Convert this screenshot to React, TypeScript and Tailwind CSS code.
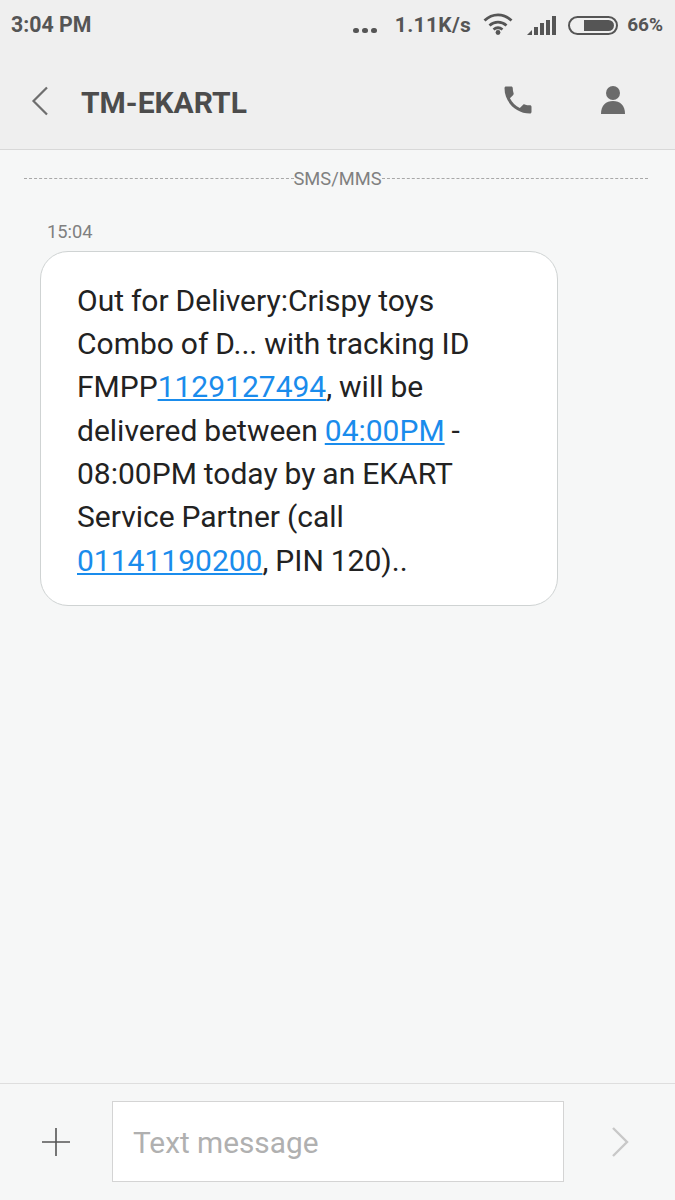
import type { ReactNode } from "react";

const Link = ({ children }: { children: ReactNode }) => (
  <span className="text-[#1a8cec] underline decoration-[1.5px] underline-offset-2">{children}</span>
);

const StatusIcons = () => (
  <div className="flex items-center text-[#555555]">
    <div className="mt-[11px] flex gap-[3px]">
      <div className="h-[5px] w-[6px] rounded-full bg-[#555555]" />
      <div className="h-[5px] w-[6px] rounded-full bg-[#555555]" />
      <div className="h-[5px] w-[6px] rounded-full bg-[#555555]" />
    </div>
    <span className="ml-[18px] mt-[1px] text-[21px] font-bold tracking-[0.3px]">1.11K/s</span>
    <svg width="30" height="22" viewBox="0 0 30 22" className="ml-[12px] -mt-[3px]" fill="none" stroke="currentColor" strokeWidth="2.8">
      <path d="M1.5 7.5c8-7.5 19-7.5 27 0" />
      <path d="M6.5 12.5c5-4.5 12-4.5 17 0" />
      <path d="M10.5 16.5c3-2.3 6-2.3 9 0" />
      <circle cx="15" cy="19.5" r="2.4" fill="currentColor" stroke="none" />
    </svg>
    <svg width="29" height="19" viewBox="0 0 29 19" className="ml-[14px]" fill="currentColor">
      <path d="M0 19l5-5v5z" />
      <rect x="7" y="11" width="4" height="8" />
      <rect x="13" y="7" width="4" height="12" />
      <rect x="19" y="4" width="4" height="15" />
      <rect x="25" y="0" width="4" height="19" />
    </svg>
    <div className="ml-[12px] flex h-[19px] w-[50px] items-center justify-end rounded-full border-2 border-[#555555] p-[2px]">
      <div className="h-full w-[30px] rounded-r-full bg-[#555555]" />
    </div>
    <span className="ml-[9px] text-[19px] font-bold">66%</span>
  </div>
);

export default function App() {
  return (
    <div className="flex h-[1200px] w-[675px] flex-col overflow-hidden bg-[#f6f7f7] font-['Roboto',sans-serif]">
      <div className="bg-[#efefef]">
        <div className="flex h-[50px] items-center justify-between pl-[11px] pr-[12px]">
          <span className="text-[21.3px] font-bold text-[#555555]">3:04 PM</span>
          <StatusIcons />
        </div>
        <div className="flex h-[100px] items-center border-b border-[#d8d8d8]">
          <svg width="18" height="30" viewBox="0 0 18 30" className="ml-[31px] mt-[3px]" fill="none" stroke="#6e6e6e" strokeWidth="2.2">
            <path d="M16 1.5 2.5 15 16 28.5" />
          </svg>
          <h1 className="ml-[32px] mt-[5px] text-[30px] font-bold text-[#4c4c4c]">TM-EKARTL</h1>
          <svg width="36" height="36" viewBox="0 0 24 24" className="ml-auto" fill="#666666">
            <path d="M6.62 10.79c1.44 2.83 3.76 5.14 6.59 6.59l2.2-2.2c.27-.27.67-.36 1.02-.24 1.12.37 2.33.57 3.57.57.55 0 1 .45 1 1V20c0 .55-.45 1-1 1-9.39 0-17-7.61-17-17 0-.55.45-1 1-1h3.5c.55 0 1 .45 1 1 0 1.25.2 2.45.57 3.57.11.35.03.74-.25 1.02l-2.2 2.2z" />
          </svg>
          <svg width="24" height="28" viewBox="0 0 24 28" className="ml-[65px] mr-[50px]" fill="#6b6b6b">
            <circle cx="12" cy="7" r="7" />
            <path d="M0 28c0-9 5-13 12-13s12 4 12 13z" />
          </svg>
        </div>
      </div>
      <div className="mt-[15px] flex items-center pl-[24px] pr-[27px]">
        <div className="flex-[269] border-t border-dashed border-[#a8a8a8]" />
        <span className="text-[18.3px] text-[#808080]">SMS/MMS</span>
        <div className="flex-[266] border-t border-dashed border-[#a8a8a8]" />
      </div>
      <div className="ml-[47px] mt-[26px] text-[18.3px] text-[#808080]">15:04</div>
      <div className="ml-[40px] mt-[5px] w-[518px] rounded-[28px] border border-[#cfd3d3] bg-white pb-[23px] pl-[36px] pr-[20px] pt-[27px] text-[30px] leading-[43.3px] text-[#222222] [word-spacing:-0.5px]">
        <div>Out for Delivery:Crispy toys</div>
        <div>Combo of D... with tracking ID</div>
        <div>FMPP<Link>1129127494</Link>, will be</div>
        <div>delivered between <Link>04:00PM</Link> -</div>
        <div>08:00PM today by an EKART</div>
        <div>Service Partner (call</div>
        <div><Link>01141190200</Link>, PIN 120)..</div>
      </div>
      <div className="mt-auto flex h-[117px] items-center border-t border-[#dedede] pb-[1px]">
        <svg width="28" height="28" viewBox="0 0 28 28" className="ml-[42px]" stroke="#555555" strokeWidth="1.6">
          <path d="M0 14h28M14 0v28" />
        </svg>
        <div className="ml-[42px] flex h-[81px] w-[452px] items-center border border-[#d4d4d4] bg-white pl-[20px] pt-[4px] text-[29.8px] text-[#b0b0b0]">
          Text message
        </div>
        <svg width="18" height="32" viewBox="0 0 18 32" className="ml-[47px]" fill="none" stroke="#c8c8c8" strokeWidth="2.4">
          <path d="M2 2l14 14L2 30" />
        </svg>
      </div>
    </div>
  );
}
